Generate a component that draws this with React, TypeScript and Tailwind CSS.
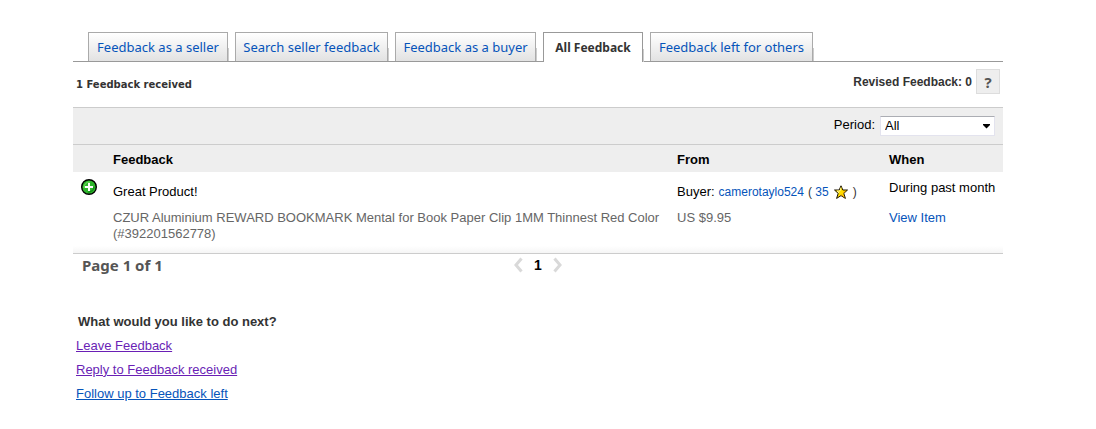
import { useState } from 'react';
import clsx from 'clsx';

const TABS = [
  { label: 'Feedback as a seller', width: 'w-[140px]' },
  { label: 'Search seller feedback', width: 'w-[153px]' },
  { label: 'Feedback as a buyer', width: 'w-[141px]' },
  { label: 'All Feedback', width: 'w-[100px]' },
  { label: 'Feedback left for others', width: 'w-[163px]' },
];

const NEXT_STEPS = [
  { label: 'Leave Feedback', color: 'text-[#6a1fb5]' },
  { label: 'Reply to Feedback received', color: 'text-[#6a1fb5]' },
  { label: 'Follow up to Feedback left', color: 'text-[#0654ba]' },
];

function PositiveIcon() {
  return (
    <svg className="block h-4 w-4" viewBox="0 0 16 16" role="img" aria-label="Positive feedback">
      <circle cx="8" cy="8" r="7.3" fill="#2eb62c" stroke="#000" strokeWidth="1.4" />
      <path d="M3 9a5.5 5.5 0 0 1 6-6" fill="none" stroke="#7fe36a" strokeWidth="1" />
      <path d="M13 8a5.3 5.3 0 0 1-6 5" fill="none" stroke="#128a17" strokeWidth="1.2" />
      <path d="M7 4h2v3h3v2H9v3H7V9H4V7h3z" fill="#fff" />
    </svg>
  );
}

function StarIcon() {
  return (
    <svg className="h-4 w-4" viewBox="0 0 16 16" role="img" aria-label="Yellow star">
      <path
        d="M8 1.8 9.8 6h4.700l-3.700 3.400 1.600 5L8 11.600l-4.400 2.800 1.600-5L1.500 6h4.700z"
        fill="#ffdc00"
        stroke="#1a1200"
        strokeWidth="1"
        strokeLinejoin="round"
      />
      <path d="M8 3.5 7 7H4l2 2" fill="none" stroke="#fff58a" strokeWidth="1" />
      <path d="m11.3 13-3.3-2.4M10 9.2l2.4-2.1" fill="none" stroke="#f09a00" strokeWidth="1" />
    </svg>
  );
}

function Chevron({ direction }: { direction: 'left' | 'right' }) {
  return (
    <svg className="block h-4 w-[9px]" viewBox="0 0 9 16" fill="none" stroke="#d9d9d9" strokeWidth="3">
      <path d={direction === 'left' ? 'M7.5 1.5 2 8l5.5 6.5' : 'M1.5 1.5 7 8l-5.5 6.5'} />
    </svg>
  );
}

export default function App() {
  const [activeTab, setActiveTab] = useState('All Feedback');
  const [period, setPeriod] = useState('All');

  return (
    <main className="bg-white pt-8 pr-[93px] pb-6 pl-[73px] font-['Liberation_Sans',Arial,sans-serif] text-[13px] leading-4 text-black">
      <div role="tablist" className="flex gap-[7px] border-b border-[#999] pl-[15px] font-['Noto_Sans',sans-serif]">
        {TABS.map((tab) => {
          const active = tab.label === activeTab;
          return (
            <button
              key={tab.label}
              type="button"
              role="tab"
              aria-selected={active}
              onClick={() => setActiveTab(tab.label)}
              className={clsx(
                'relative flex h-[29px] shrink-0 items-center justify-center border border-b-0 whitespace-nowrap after:absolute after:-right-[2px] after:bottom-0 after:h-[13px] after:w-px after:bg-[#ccc]',
                tab.width,
                active
                  ? '-mb-px h-[30px] border-[#999] bg-white text-[12px] font-bold text-[#333]'
                  : 'border-[#aaa] bg-linear-to-b from-white to-[#e2e2e2] text-[13px] text-[#0654ba]'
              )}
            >
              {tab.label}
            </button>
          );
        })}
      </div>

      <div className="flex h-[45px] items-center justify-between pr-[3px] pl-[3px]">
        <h2 className="font-['DejaVu_Sans',Verdana,sans-serif] text-[10px] font-bold text-[#333]">
          1 Feedback received
        </h2>
        <div className="flex items-center gap-1 pb-[6px]">
          <span className="text-[12px] font-bold text-[#333]">Revised Feedback: 0</span>
          <button
            type="button"
            aria-label="Help"
            className="h-[25px] w-6 border border-[#ddd] bg-[#eee] font-['Noto_Sans',sans-serif] text-[15px] font-bold text-[#555]"
          >
            ?
          </button>
        </div>
      </div>

      <div className="flex h-[38px] items-center justify-end gap-[5px] border-y border-[#ccc] bg-[#eee] pr-2">
        <label htmlFor="period" className="pb-0.5">
          Period:
        </label>
        <div className="relative">
          <select
            id="period"
            value={period}
            onChange={(e) => setPeriod(e.target.value)}
            className="block h-5 w-[115px] appearance-none border border-[#e3e3ee] border-t-[#abadb3] bg-white pl-1"
          >
            <option>All</option>
            <option>Past month</option>
            <option>Past 6 months</option>
            <option>Past 12 months</option>
          </select>
          <svg className="pointer-events-none absolute top-2 right-1 h-[5px] w-[9px]" viewBox="0 0 9 5">
            <path d="M1 0h7v1L4.5 4.5 1 1z" />
          </svg>
        </div>
      </div>

      <table className="w-full table-fixed border-b border-[#ccc] bg-[linear-gradient(to_top,#f5f5f5,#fff_7px)] text-left">
        <colgroup>
          <col className="w-10" />
          <col />
          <col className="w-[212px]" />
          <col className="w-[114px]" />
        </colgroup>
        <thead>
          <tr className="h-[27px] bg-[#eee]">
            <th aria-label="Rating"></th>
            <th className="pt-0.5">Feedback</th>
            <th className="pt-0.5">From</th>
            <th className="pt-0.5">When</th>
          </tr>
        </thead>
        <tbody>
          <tr className="h-[38px]">
            <td className="pt-[7px] pl-2 align-top">
              <PositiveIcon />
            </td>
            <td className="pt-0.5">Great Product!</td>
            <td className="pt-0.5">
              <span className="flex items-center gap-1">
                <span>Buyer:</span>
                <span className="flex items-center gap-1 text-[12px] text-[#333]">
                  <a href="#member" className="text-[#0654ba]">camerotaylo524</a>
                  <span>
                    ( <a href="#score" className="text-[#0654ba]">35</a>
                  </span>
                  <StarIcon />
                  <span>)</span>
                </span>
              </span>
            </td>
            <td className="pt-2 align-top whitespace-nowrap">During past month</td>
          </tr>
          <tr className="h-[43px] align-top text-[#666]">
            <td></td>
            <td className="pr-3">
              CZUR Aluminium REWARD BOOKMARK Mental for Book Paper Clip 1MM Thinnest Red Color (#392201562778)
            </td>
            <td>US $9.95</td>
            <td>
              <a href="#item" className="text-[#0654ba]">View Item</a>
            </td>
          </tr>
        </tbody>
      </table>

      <div className="grid h-[22px] grid-cols-3 items-center px-[9px]">
        <span className="font-['Noto_Sans',sans-serif] text-[15px] font-bold text-[#555]">Page 1 of 1</span>
        <nav aria-label="Pages" className="flex items-center justify-center gap-[11px]">
          <button type="button" aria-label="Previous page" disabled>
            <Chevron direction="left" />
          </button>
          <span className="text-[14px] font-bold">1</span>
          <button type="button" aria-label="Next page" disabled>
            <Chevron direction="right" />
          </button>
        </nav>
      </div>

      <section className="mt-[38px] pl-[3px]">
        <h3 className="pl-[2px] font-bold text-[#333]">What would you like to do next?</h3>
        <ul className="mt-2 flex flex-col gap-2">
          {NEXT_STEPS.map((step) => (
            <li key={step.label}>
              <a href="#next" className={clsx('underline', step.color)}>{step.label}</a>
            </li>
          ))}
        </ul>
      </section>
    </main>
  );
}
